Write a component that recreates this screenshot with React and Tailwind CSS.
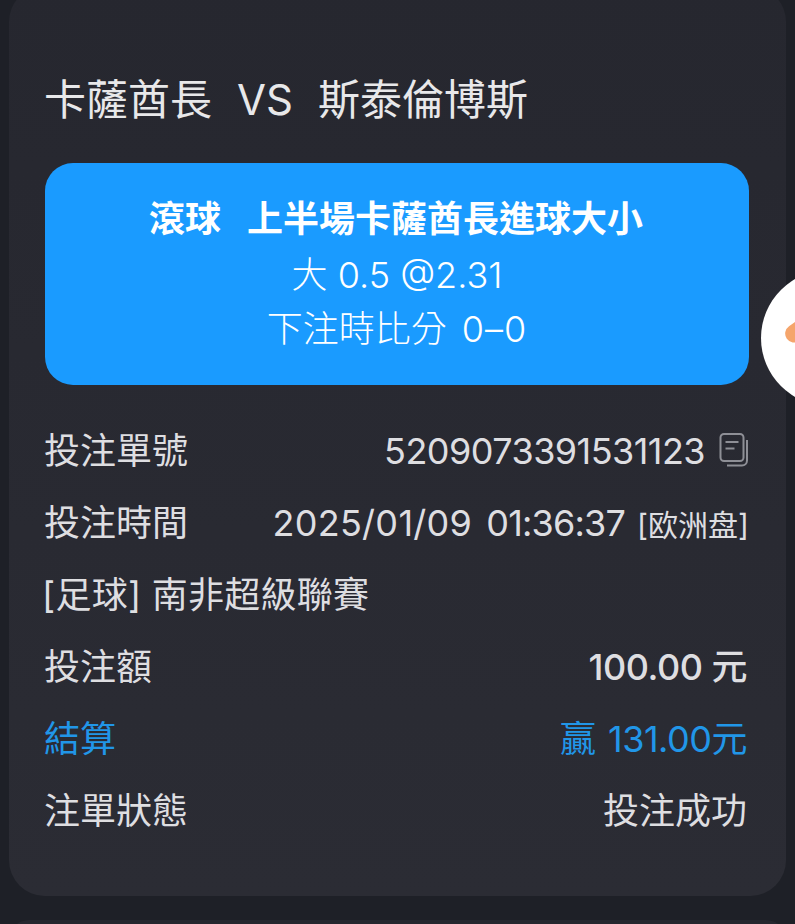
const font = "font-['Inter','Noto_Sans_CJK_TC',sans-serif]";

function CopyIcon() {
  return (
    <svg width="30" height="36" viewBox="0 0 30 36" fill="none" stroke="#8e8f96" strokeWidth="2">
      <rect x="1.5" y="1" width="23" height="27" rx="3.5" />
      <path d="M6.5 9h13M6.5 15.5h9" />
      <path d="M28 7v20.5a5 5 0 0 1-5 5H8" />
    </svg>
  );
}

function Row({ label, children, className = '' }) {
  return (
    <div className={`flex h-[72px] items-center justify-between ${className}`}>
      <span>{label}</span>
      {children}
    </div>
  );
}

export default function App() {
  return (
    <div className={`relative h-[924px] w-[795px] overflow-hidden bg-[#1e2027] ${font}`}>
      <div className="ml-[9px] mt-[-14px] h-[910px] w-[777px] rounded-[36px] bg-gradient-to-b from-[#26272f] to-[#2b2c34] pl-[35px] pr-[37px] pt-[89px] text-[36px] text-[#dedee1]">
        <h1 className="flex h-[74px] gap-[25px] text-[42px] font-normal leading-[50px] text-[#e8e8ea]">
          <span>卡薩酋長</span>
          <span>VS</span>
          <span>斯泰倫博斯</span>
        </h1>
        <div className="ml-[1px] mt-[14px] h-[222px] rounded-[28px] bg-[#1a9bff] pt-[31px] text-center leading-[54px] text-white">
          <div className="flex h-[54px] justify-center gap-[26px] pr-[2px] font-semibold leading-[50px]">
            <span>滾球</span>
            <span>上半場卡薩酋長進球大小</span>
          </div>
          <div className="font-light">大 0.5 @2.31</div>
          <div className="flex justify-center gap-[15px] font-light">
            <span>下注時比分</span>
            <span className="tracking-[1px]">0–0</span>
          </div>
        </div>
        <div className="mt-[30px]">
          <Row label="投注單號">
            <div className="flex items-center gap-[14px]">
              <span className="tracking-[-0.55px]">5209073391531123</span>
              <CopyIcon />
            </div>
          </Row>
          <Row label="投注時間">
            <div className="flex items-baseline gap-[12px]">
              <span className="flex gap-[14px]">
                <span className="tracking-[0.3px]">2025/01/09</span>
                <span className="tracking-[-0.8px]">01:36:37</span>
              </span>
              <span className="text-[30px]">[欧洲盘]</span>
            </div>
          </Row>
          <Row label={<span className="-ml-[2px] tracking-[0.25px]">[足球] 南非超級聯賽</span>} />
          <Row label="投注額">
            <span className="mr-[2px] whitespace-pre font-medium tracking-[-0.5px]">100.00 元</span>
          </Row>
          <Row label="結算" className="text-[#2196e8]">
            <span className="mr-[2px] flex gap-[12px]">
              <span>贏</span>
              <span className="tracking-[-0.5px]">131.00元</span>
            </span>
          </Row>
          <Row label="注單狀態">
            <span className="mr-[2px]">投注成功</span>
          </Row>
        </div>
      </div>
      <div className="ml-[9px] mt-[24px] h-[20px] w-[777px] rounded-t-[36px] bg-[#26272f]" />
      <div className="absolute left-[761px] top-[270px] h-[136px] w-[136px] rounded-full bg-white">
        <div className="absolute left-[24px] top-[54px] h-[18px] w-[20px] rotate-[-35deg] rounded-l-full bg-[#f5a56c]" />
      </div>
    </div>
  );
}
